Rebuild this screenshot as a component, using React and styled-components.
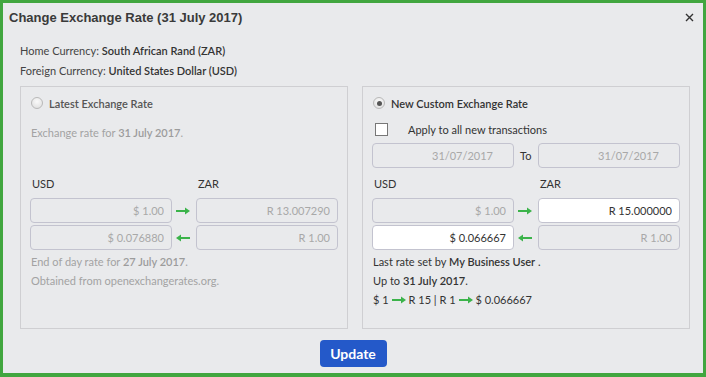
import styled, { createGlobalStyle } from "styled-components";

const GlobalStyle = createGlobalStyle`
  html, body {
    margin: 0;
    padding: 0;
    background: #41a63f;
  }
  body {
    font-family: Lato, "Open Sans", sans-serif;
  }
`;

const Modal = styled.div`
  margin: 3px;
  width: 700px;
  height: 370px;
  background: #e9eaec;
  display: flex;
  flex-direction: column;
  box-sizing: border-box;
`;

const Header = styled.div`
  display: flex;
  justify-content: space-between;
  align-items: center;
  height: 28px;
  padding: 0 8px 0 6px;
`;

const Title = styled.h1`
  margin: 0;
  font-family: "Liberation Sans", Arial, sans-serif;
  font-size: 13px;
  font-weight: 700;
  color: #3a3a3a;
`;

const CloseButton = styled.button`
  border: 0;
  background: none;
  padding: 0;
  width: 12px;
  height: 12px;
  display: flex;
  align-items: center;
  justify-content: center;
  cursor: pointer;
`;

const Info = styled.div`
  padding: 10px 17px 0;
  font-size: 11px;
  color: #444;
  line-height: 20px;
`;

const Strong = styled.span`
  font-weight: 600;
  color: ${(p) => (p.$muted ? "#9c9c9c" : "#333")};
`;

const Panels = styled.div`
  display: grid;
  grid-template-columns: 328px 328px;
  gap: 14px;
  padding: 5px 0 0 17px;
`;

const Panel = styled.div`
  border: 1px solid #cfcfd2;
  height: 243px;
  box-sizing: border-box;
  padding: 8px 9px 0;
  display: flex;
  flex-direction: column;
`;

const RadioRow = styled.label`
  display: flex;
  align-items: center;
  gap: 6px;
  height: 16px;
  padding-left: 1px;
  font-size: 11px;
  font-weight: 600;
  color: ${(p) => (p.$checked ? "#333" : "#555")};
`;

const Radio = styled.span`
  width: 10px;
  height: 10px;
  border-radius: 50%;
  border: 1px solid #b9b9b9;
  background: radial-gradient(circle at 50% 35%, #fafafa, #dcdcdc);
  display: flex;
  align-items: center;
  justify-content: center;
  &::after {
    content: "";
    display: ${(p) => (p.$checked ? "block" : "none")};
    width: 5px;
    height: 5px;
    border-radius: 50%;
    background: #555;
  }
`;

const Note = styled.div`
  font-size: 11px;
  line-height: 19px;
  height: 19px;
  padding-left: 1px;
  margin-top: ${(p) => p.$mt || 0}px;
  color: ${(p) => (p.$muted ? "#a3a3a3" : "#333")};
  display: flex;
  align-items: center;
  gap: 3px;
`;

const CheckRow = styled.label`
  display: flex;
  align-items: center;
  height: 16px;
  margin-top: 10px;
  font-size: 11px;
  color: #333;
`;

const CheckBox = styled.span`
  width: 11px;
  height: 11px;
  border: 1px solid #777;
  background: #fff;
  margin: 0 20px 0 3px;
`;

const DateRow = styled.div`
  display: grid;
  grid-template-columns: 142px 24px 142px;
  align-items: center;
  margin-top: 6px;
`;

const ToLabel = styled.span`
  font-size: 11px;
  color: #333;
  padding-left: 6px;
`;

const RateGrid = styled.div`
  display: grid;
  grid-template-columns: 142px 24px 142px;
  row-gap: 2px;
  align-items: center;
  margin-top: ${(p) => p.$mt || 0}px;
`;

const ColLabel = styled.div`
  font-size: 11px;
  color: #333;
  line-height: 16px;
  height: 16px;
  padding-left: 2px;
  margin-bottom: 4px;
  grid-column: ${(p) => p.$col};
`;

const Field = styled.input`
  box-sizing: border-box;
  width: 100%;
  height: 25px;
  border: 1px solid #c3c3cf;
  border-radius: 4px;
  background: ${(p) => (p.disabled ? "#e9eaec" : "#fff")};
  color: ${(p) => (p.disabled ? "#a8a8a8" : "#333")};
  -webkit-text-fill-color: ${(p) => (p.disabled ? "#a8a8a8" : "#333")};
  opacity: 1;
  font-family: Lato, sans-serif;
  font-size: 11px;
  text-align: right;
  padding: 0 ${(p) => (p.$wide ? 20 : 7)}px 0 7px;
  outline: none;
`;

const ArrowCell = styled.span`
  display: flex;
  justify-content: center;
  padding-right: 2px;
`;

const Footer = styled.div`
  display: flex;
  justify-content: center;
  padding-top: 11px;
`;

const UpdateButton = styled.button`
  width: 67px;
  height: 27px;
  border: 0;
  border-radius: 4px;
  background: #2459c9;
  color: #fff;
  font-family: Lato, sans-serif;
  font-weight: 700;
  font-size: 14px;
  cursor: pointer;
`;

const Arrow = ({ dir = "right" }) => (
  <svg width="14" height="8" viewBox="0 0 14 8" style={{ transform: dir === "left" ? "scaleX(-1)" : "none" }}>
    <rect x="0" y="3" width="10" height="2" fill="#3bb34a" />
    <polygon points="9,0.5 14,4 9,7.5" fill="#3bb34a" />
  </svg>
);

const RateFields = ({ rows, mt }) => (
  <RateGrid $mt={mt}>
    <ColLabel $col="1">USD</ColLabel>
    <ColLabel $col="3">ZAR</ColLabel>
    {rows.map((r, i) => [
      <Field key={`a${i}`} readOnly disabled={r.leftDisabled} value={r.left} />,
      <ArrowCell key={`b${i}`}>
        <Arrow dir={r.dir} />
      </ArrowCell>,
      <Field key={`c${i}`} readOnly disabled={r.rightDisabled} value={r.right} />,
    ])}
  </RateGrid>
);

export default function App() {
  return (
    <>
      <GlobalStyle />
      <Modal>
        <Header>
          <Title>Change Exchange Rate (31 July 2017)</Title>
          <CloseButton type="button" aria-label="close">
            <svg width="9" height="9" viewBox="0 0 9 9">
              <path d="M1 1L8 8M8 1L1 8" stroke="#333" strokeWidth="1.4" />
            </svg>
          </CloseButton>
        </Header>
        <Info>
          <div>
            Home Currency: <Strong>South African Rand (ZAR)</Strong>
          </div>
          <div>
            Foreign Currency: <Strong>United States Dollar (USD)</Strong>
          </div>
        </Info>
        <Panels>
          <Panel>
            <RadioRow>
              <Radio />
              Latest Exchange Rate
            </RadioRow>
            <Note $muted $mt={12}>
              <span>
                Exchange rate for <Strong $muted>31 July 2017</Strong>.
              </span>
            </Note>
            <RateFields
              mt={34}
              rows={[
                { left: "$ 1.00", right: "R 13.007290", dir: "right", leftDisabled: true, rightDisabled: true },
                { left: "$ 0.076880", right: "R 1.00", dir: "left", leftDisabled: true, rightDisabled: true },
              ]}
            />
            <Note $muted $mt={2}>
              <span>
                End of day rate for <Strong $muted>27 July 2017</Strong>.
              </span>
            </Note>
            <Note $muted>Obtained from openexchangerates.org.</Note>
          </Panel>
          <Panel>
            <RadioRow $checked>
              <Radio $checked />
              New Custom Exchange Rate
            </RadioRow>
            <CheckRow>
              <CheckBox />
              Apply to all new transactions
            </CheckRow>
            <DateRow>
              <Field readOnly disabled $wide value="31/07/2017" />
              <ToLabel>To</ToLabel>
              <Field readOnly disabled $wide value="31/07/2017" />
            </DateRow>
            <RateFields
              mt={8}
              rows={[
                { left: "$ 1.00", right: "R 15.000000", dir: "right", leftDisabled: true, rightDisabled: false },
                { left: "$ 0.066667", right: "R 1.00", dir: "left", leftDisabled: false, rightDisabled: true },
              ]}
            />
            <Note $mt={2}>
              <span>
                Last rate set by <Strong>My Business User</Strong> .
              </span>
            </Note>
            <Note>
              <span>
                Up to <Strong>31 July 2017</Strong>.
              </span>
            </Note>
            <Note>
              $ 1 <Arrow /> R 15 | R 1 <Arrow /> $ 0.066667
            </Note>
          </Panel>
        </Panels>
        <Footer>
          <UpdateButton type="button">Update</UpdateButton>
        </Footer>
      </Modal>
    </>
  );
}
